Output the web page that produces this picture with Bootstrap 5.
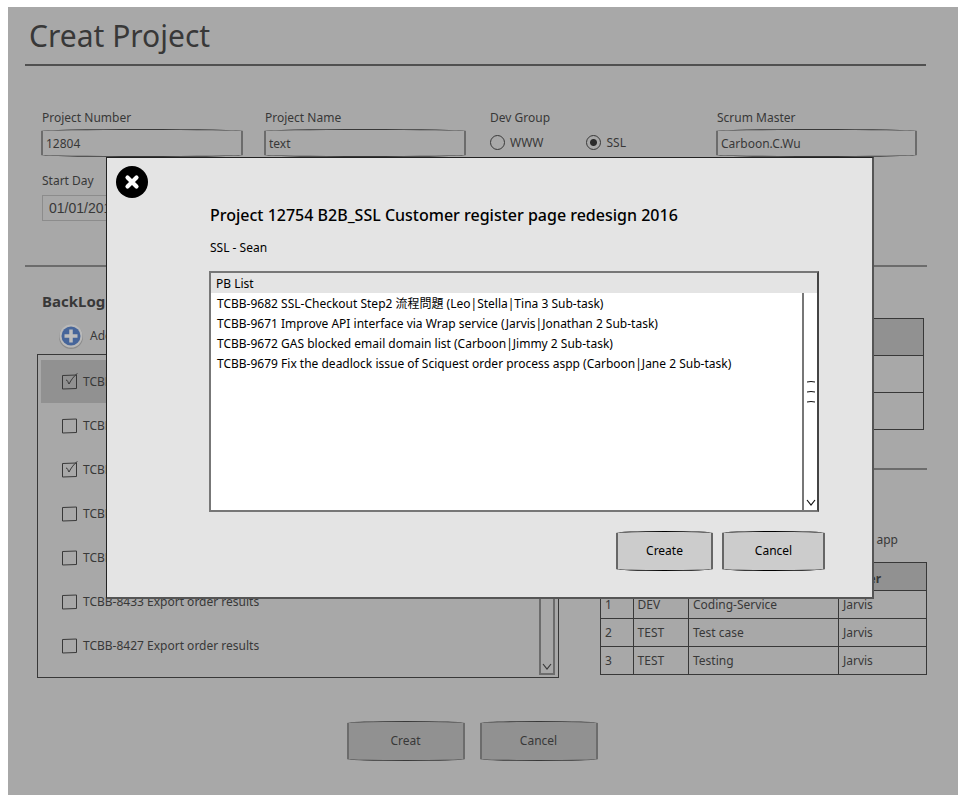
<!DOCTYPE html>
<html lang="en">
<head>
<meta charset="utf-8">
<meta name="viewport" content="width=device-width, initial-scale=1">
<title>Creat Project</title>
<link href="https://cdn.jsdelivr.net/npm/bootstrap@5.3.0/dist/css/bootstrap.min.css" rel="stylesheet">
<style>
  :root { --ink: #383838; --soft: #6c6c6c; --shade: #a8a8a8; --dark: #919191; }
  body { font-family: "Comic Sans MS", "Noto Sans", "Noto Sans CJK TC", sans-serif; font-size: 12px; line-height: 20px; color: var(--ink); background: #fff; }
  input, button { font: inherit; color: inherit; }
  .screen { background: var(--shade); margin: 7px 2px 4px 8px; padding: 9px 31px 34px 17px; }
  .page-title { font-size: 30px; line-height: 40px; margin: 0 0 8px 4px; font-weight: 400; }
  .rule { height: 2px; background: var(--soft); }
  .rule-top { background: #505050; margin-right: 1px; }
  .rule-mid { margin-top: 44px; }
  .rule-side { margin-top: 38px; }
  .fields { display: grid; grid-template-columns: 223fr 225fr 227fr 201fr; margin: 42px 10px 0 16px; row-gap: 14px; }
  .fields label, .fields .caption { display: block; line-height: 20px; margin-left: 1px; }
  .sketch { border: 1px solid var(--ink); border-left: 2px solid var(--soft); border-right: 2px solid var(--soft); border-radius: 50% / 2px; background: transparent; }
  .box { width: 100%; max-width: 202px; height: 28px; padding: 0 3px; margin-top: 1px; display: block; }
  .date { border: 1px solid #8c8c8c; height: 26px; padding: 0 6px; margin: 4px 0 0 1px; width: 202px; background: transparent; font-family: "Liberation Sans", sans-serif; font-size: 14px; display: block; }
  .dot { appearance: none; width: 15px; height: 15px; margin: 0; border: 1px solid var(--ink); border-radius: 50%; }
  .dot:checked { background: radial-gradient(circle, #2b2b2b 3px, transparent 4px); }
  .choice { gap: 4px; height: 29px; }
  .choices { gap: 43px; padding-left: 1px; }
  .middle { display: grid; grid-template-columns: 522fr 327fr; column-gap: 41px; margin-left: 12px; }
  .section-name { font-size: 15px; line-height: 20px; font-weight: 700; margin: 24px 0 12px 5px; }
  .add { gap: 6px; margin: 0 0 5px 21px; border: 0; background: none; padding: 0; height: 26px; }
  .tasks { border: 1px solid var(--ink); height: 324px; padding: 5px 3px 2px; }
  .tasks ul { margin: 0; padding: 0; list-style: none; }
  .tasks li { height: 44px; padding-left: 21px; gap: 4px; }
  .tasks li:first-child { background: var(--dark); height: 43px; margin-bottom: 1px; }
  .tick { appearance: none; width: 17px; height: 18px; margin: 0; background: url("data:image/svg+xml,%3Csvg xmlns='http://www.w3.org/2000/svg' viewBox='0 0 17 18' fill='none' stroke='%23383838'%3E%3Cpath d='M.5 2.500 14.5 2 14.5 15.500 .5 16Z'/%3E%3C/svg%3E") no-repeat; }
  .tick:checked { background-image: url("data:image/svg+xml,%3Csvg xmlns='http://www.w3.org/2000/svg' viewBox='0 0 17 18' fill='none' stroke='%23383838'%3E%3Cpath d='M.5 2.500 14.5 2 14.5 15.500 .5 16Z'/%3E%3Cpath d='M4 7C6 7 6 10 7 11 9 7 12 3 15.500 .3'/%3E%3C/svg%3E"); }
  .slider { width: 16px; border: 2px solid var(--soft); flex: none; }
  .plain { width: 100%; border-collapse: collapse; table-layout: fixed; }
  .plain th, .plain td { border: 1px solid var(--ink); padding: 0 4px; line-height: 20px; overflow: hidden; }
  .plain th { background: var(--dark); }
  .upper-wrap { padding: 51px 3px 0 0; }
  .upper th, .upper td { height: 37px; }
  .lower th { height: 28px; padding: 4px 2px 0; }
  .lower td { height: 28px; }
  .note { margin: 60px 29px 12px 0; }
  .btn-sketch { height: 40px; width: 118px; padding: 0; background: var(--dark); }
  .actions { gap: 15px; margin: 43px 8px 0 0; }
  .popup { position: absolute; top: 157px; left: 106px; right: 86px; background: #e4e4e4; color: #000; border: 1px solid #222; border-right: 2px solid #555; border-bottom: 2px solid #555; padding: 8px 47px 26px 9px; }
  .popup-main { padding-left: 93px; }
  .popup h2 { font-size: 16px; line-height: 24px; margin: 5px 0 11px 1px; font-weight: 500; }
  .popup .owner { margin: 0 0 13px 1px; }
  .pb { border: 2px solid #777; border-right-color: #444; height: 241px; margin-right: 6px; }
  .pb-head { background: #e4e4e4; height: 20px; padding-left: 5px; line-height: 21px; }
  .pb ul { margin: 0; padding: 1px 0 0 6px; list-style: none; }
  .pb-track { width: 15px; border-left: 2px solid #777; padding-top: 87px; flex: none; }
  .popup .sketch { border-color: #000 #666; }
  .popup .btn-sketch { background: #ccc; width: 97px; }
  .popup .btn-wide { width: 103px; }
  .popup-actions { gap: 9px; margin-top: 19px; }
  .close-round { border: 0; background: none; padding: 0; display: block; height: 32px; }
</style>
<script src="https://cdn.jsdelivr.net/npm/bootstrap@5.3.0/dist/js/bootstrap.bundle.min.js"></script>
</head>
<body>
<main class="screen">
  <h1 class="page-title">Creat Project</h1>
  <div class="rule rule-top"></div>

  <form class="fields">
    <div><label for="num">Project Number</label><input class="sketch box" id="num" type="text" value="12804"></div>
    <div><label for="name">Project Name</label><input class="sketch box" id="name" type="text" value="text"></div>
    <div role="radiogroup" aria-labelledby="grp">
      <span class="caption" id="grp">Dev Group</span>
      <div class="choices d-flex">
        <div class="choice d-flex align-items-center"><input class="dot" type="radio" name="g" id="www"><label for="www">WWW</label></div>
        <div class="choice d-flex align-items-center"><input class="dot" type="radio" name="g" id="ssl" checked><label for="ssl">SSL</label></div>
      </div>
    </div>
    <div><label for="master">Scrum Master</label><input class="sketch box" id="master" type="text" value="Carboon.C.Wu"></div>
    <div><label for="start">Start Day</label><input class="date" id="start" type="text" value="01/01/2016"></div>
  </form>

  <div class="rule rule-mid"></div>

  <div class="middle">
    <section>
      <h2 class="section-name">BackLog</h2>
      <button type="button" class="add d-flex align-items-center">
        <svg width="26" height="26" viewBox="0 0 26 26" aria-hidden="true"><circle cx="13" cy="14" r="12" fill="#8b8b8b"/><circle cx="13" cy="13" r="11.500" fill="#b9b9b9"/><circle cx="13" cy="13" r="9.500" fill="#46659a"/><path d="M13 6.500v13M6.500 13h13" stroke="#bdbdbd" stroke-width="3.500"/></svg>
        Add
      </button>
      <div class="tasks d-flex">
        <ul class="flex-grow-1">
          <li class="d-flex align-items-center"><input class="tick" type="checkbox" id="t1" checked><label for="t1">TCBB</label></li>
          <li class="d-flex align-items-center"><input class="tick" type="checkbox" id="t2"><label for="t2">TCBB</label></li>
          <li class="d-flex align-items-center"><input class="tick" type="checkbox" id="t3" checked><label for="t3">TCBB</label></li>
          <li class="d-flex align-items-center"><input class="tick" type="checkbox" id="t4"><label for="t4">TCBB</label></li>
          <li class="d-flex align-items-center"><input class="tick" type="checkbox" id="t5"><label for="t5">TCBB</label></li>
          <li class="d-flex align-items-center"><input class="tick" type="checkbox" id="t6"><label for="t6">TCBB-8433 Export order results</label></li>
          <li class="d-flex align-items-center"><input class="tick" type="checkbox" id="t7"><label for="t7">TCBB-8427 Export order results</label></li>
        </ul>
        <div class="slider d-flex flex-column justify-content-end align-items-center">
          <svg width="12" height="12" viewBox="0 0 12 12" fill="none" stroke="#383838" stroke-width="1.200" aria-hidden="true"><path d="M2 3 6 8 10 3"/></svg>
        </div>
      </div>
    </section>

    <section>
      <div class="upper-wrap">
        <table class="plain upper">
          <thead><tr><th></th></tr></thead>
          <tbody><tr><td></td></tr><tr><td></td></tr></tbody>
        </table>
      </div>
      <div class="rule rule-side"></div>
      <p class="note text-end">app</p>
      <table class="plain lower">
        <colgroup><col style="width:10%"><col style="width:17%"><col style="width:46%"><col style="width:27%"></colgroup>
        <thead><tr><th></th><th></th><th></th><th>Owner</th></tr></thead>
        <tbody>
          <tr><td>1</td><td>DEV</td><td>Coding-Service</td><td>Jarvis</td></tr>
          <tr><td>2</td><td>TEST</td><td>Test case</td><td>Jarvis</td></tr>
          <tr><td>3</td><td>TEST</td><td>Testing</td><td>Jarvis</td></tr>
        </tbody>
      </table>
    </section>
  </div>

  <div class="actions d-flex justify-content-center">
    <button type="button" class="sketch btn-sketch">Creat</button>
    <button type="button" class="sketch btn-sketch">Cancel</button>
  </div>
</main>

<div class="popup" role="dialog" aria-labelledby="popup-title">
  <button type="button" class="close-round" aria-label="Close">
    <svg width="32" height="32" viewBox="0 0 32 32" aria-hidden="true"><circle cx="16" cy="16" r="16"/><path d="M11.500 11.500 20.500 20.500M20.500 11.500 11.500 20.500" stroke="#fff" stroke-width="4.200" stroke-linecap="round"/></svg>
  </button>
  <div class="popup-main">
    <h2 id="popup-title">Project 12754 B2B_SSL Customer register page redesign 2016</h2>
    <p class="owner">SSL - Sean</p>
    <div class="pb bg-white d-flex flex-column">
      <div class="pb-head">PB List</div>
      <div class="d-flex flex-grow-1">
        <ul class="flex-grow-1">
          <li>TCBB-9682 SSL-Checkout Step2 流程問題 (Leo|Stella|Tina 3 Sub-task)</li>
          <li>TCBB-9671 Improve API interface via Wrap service (Jarvis|Jonathan 2 Sub-task)</li>
          <li>TCBB-9672 GAS blocked email domain list (Carboon|Jimmy 2 Sub-task)</li>
          <li>TCBB-9679 Fix the deadlock issue of Sciquest order process aspp (Carboon|Jane 2 Sub-task)</li>
        </ul>
        <div class="pb-track d-flex flex-column justify-content-between align-items-center">
          <svg width="10" height="24" viewBox="0 0 10 24" fill="none" stroke="#111" aria-hidden="true"><path d="M1 2Q5 1 9 2M1 12Q5 11 9 12M1 22Q5 21 9 22"/></svg>
          <svg width="12" height="12" viewBox="0 0 12 12" fill="none" stroke="#111" stroke-width="1.200" aria-hidden="true"><path d="M2 2 6 7 10 2"/></svg>
        </div>
      </div>
    </div>
    <div class="popup-actions d-flex justify-content-end">
      <button type="button" class="sketch btn-sketch">Create</button>
      <button type="button" class="sketch btn-sketch btn-wide">Cancel</button>
    </div>
  </div>
</div>
</body>
</html>
